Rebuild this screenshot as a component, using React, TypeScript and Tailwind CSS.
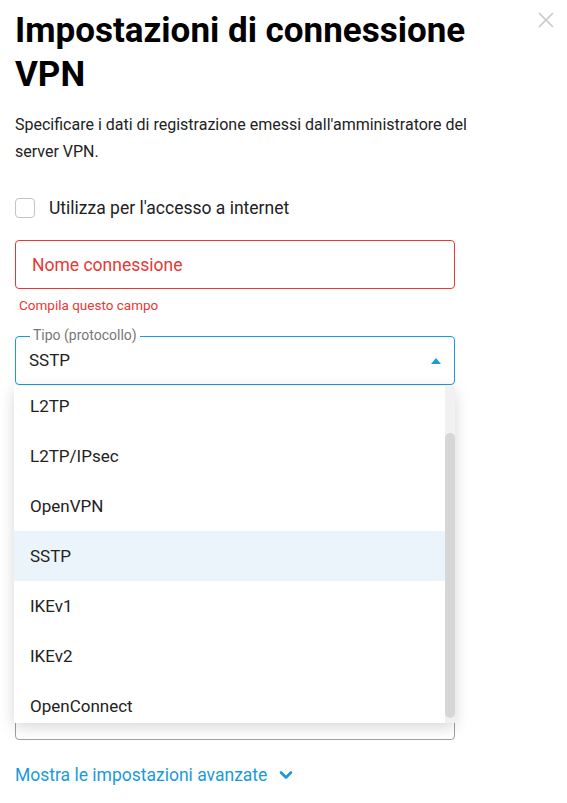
import React from 'react';

const protocols = ['L2TP', 'L2TP/IPsec', 'OpenVPN', 'SSTP', 'IKEv1', 'IKEv2', 'OpenConnect'];

const CloseIcon = () => (
  <svg width="18" height="18" viewBox="0 0 18 18" fill="none" stroke="#c8c8c8" strokeWidth="1.6">
    <path d="M2 2 L16 16 M16 2 L2 16" />
  </svg>
);

const ChevronDown = () => (
  <svg width="14" height="10" viewBox="0 0 14 10" fill="none" stroke="#1a9ad9" strokeWidth="2.6" strokeLinecap="round" strokeLinejoin="round">
    <path d="M2 2.5 L7 7.5 L12 2.5" />
  </svg>
);

export default function App() {
  const selected = 'SSTP';

  return (
    <div className="relative min-h-[803px] w-[567px] bg-white px-[15px] text-[#222]" style={{ fontFamily: 'Roboto, "Liberation Sans", sans-serif' }}>
      <button className="absolute right-[12px] top-[11px]">
        <CloseIcon />
      </button>

      <h1 className="max-w-[490px] pt-[9px] text-[35px] font-bold leading-[44px] text-black">
        Impostazioni di connessione VPN
      </h1>

      <p className="mt-[14px] max-w-[475px] text-[16px] leading-[27px] text-[#222]">
        Specificare i dati di registrazione emessi dall'amministratore del server VPN.
      </p>

      <label className="mt-[30px] flex items-center gap-[14px]">
        <span className="h-[20px] w-[20px] rounded-[4px] border border-[#c4c4c4] bg-white" />
        <span className="text-[17.5px] text-[#222]">Utilizza per l'accesso a internet</span>
      </label>

      <div className="mt-[19px] w-[440px]">
        <div className="flex h-[49px] items-center rounded-[4px] border border-[#e53935] px-[16px]">
          <span className="text-[17.5px] text-[#e53935]">Nome connessione</span>
        </div>
        <div className="mt-[7px] pl-[4px] text-[13.5px] leading-[18px] text-[#e53935]">Compila questo campo</div>
      </div>

      <div className="relative mt-[22px] w-[440px]">
        <div className="flex h-[49px] items-center justify-between rounded-[4px] border border-[#1a9ad9] px-[13px]">
          <span className="text-[17px] text-[#222]">{selected}</span>
          <svg width="10" height="6" viewBox="0 0 10 6">
            <path d="M0 6 L5 0 L10 6 Z" fill="#1a9ad9" />
          </svg>
        </div>
        <span className="absolute -top-[10px] left-[15px] bg-white px-[3px] text-[14px] leading-[18px] text-[#777]">
          Tipo (protocollo)
        </span>

        {/* open protocol menu */}
        <div className="absolute left-[-1px] top-[50px] z-10 flex h-[337px] w-[441px] overflow-hidden bg-white shadow-[0_4px_14px_rgba(0,0,0,0.16)]">
          <div className="flex-1 overflow-hidden">
            <ul className="-mt-[5px]">
              {protocols.map((p) => (
                <li
                  key={p}
                  className={`flex h-[50px] items-center pl-[16px] text-[17px] text-[#222] ${p === selected ? 'bg-[#ebf4fa]' : ''}`}
                >
                  {p}
                </li>
              ))}
            </ul>
          </div>
          <div className="w-[10px] bg-[#f1f1f1] pb-[5px] pt-[47px]">
            <div className="h-full rounded-full bg-[#d6d6d6]" />
          </div>
        </div>
      </div>

      {/* fields below the menu */}
      <div className="mt-[22px] flex w-[440px] flex-col gap-[22px]">
        <div className="h-[49px] rounded-[4px] border border-[#9aa0a6]" />
        <div className="h-[49px] rounded-[4px] border border-[#9aa0a6]" />
        <div className="h-[49px] rounded-[4px] border border-[#9aa0a6]" />
        <div className="h-[49px] rounded-[4px] border border-[#9aa0a6]" />
        <div className="h-[49px] rounded-[4px] border border-[#9aa0a6]" />
      </div>

      <button className="mt-[23px] flex items-center gap-[12px] text-[17.5px] leading-[24px] text-[#1a9ad9]">
        Mostra le impostazioni avanzate
        <ChevronDown />
      </button>
    </div>
  );
}
